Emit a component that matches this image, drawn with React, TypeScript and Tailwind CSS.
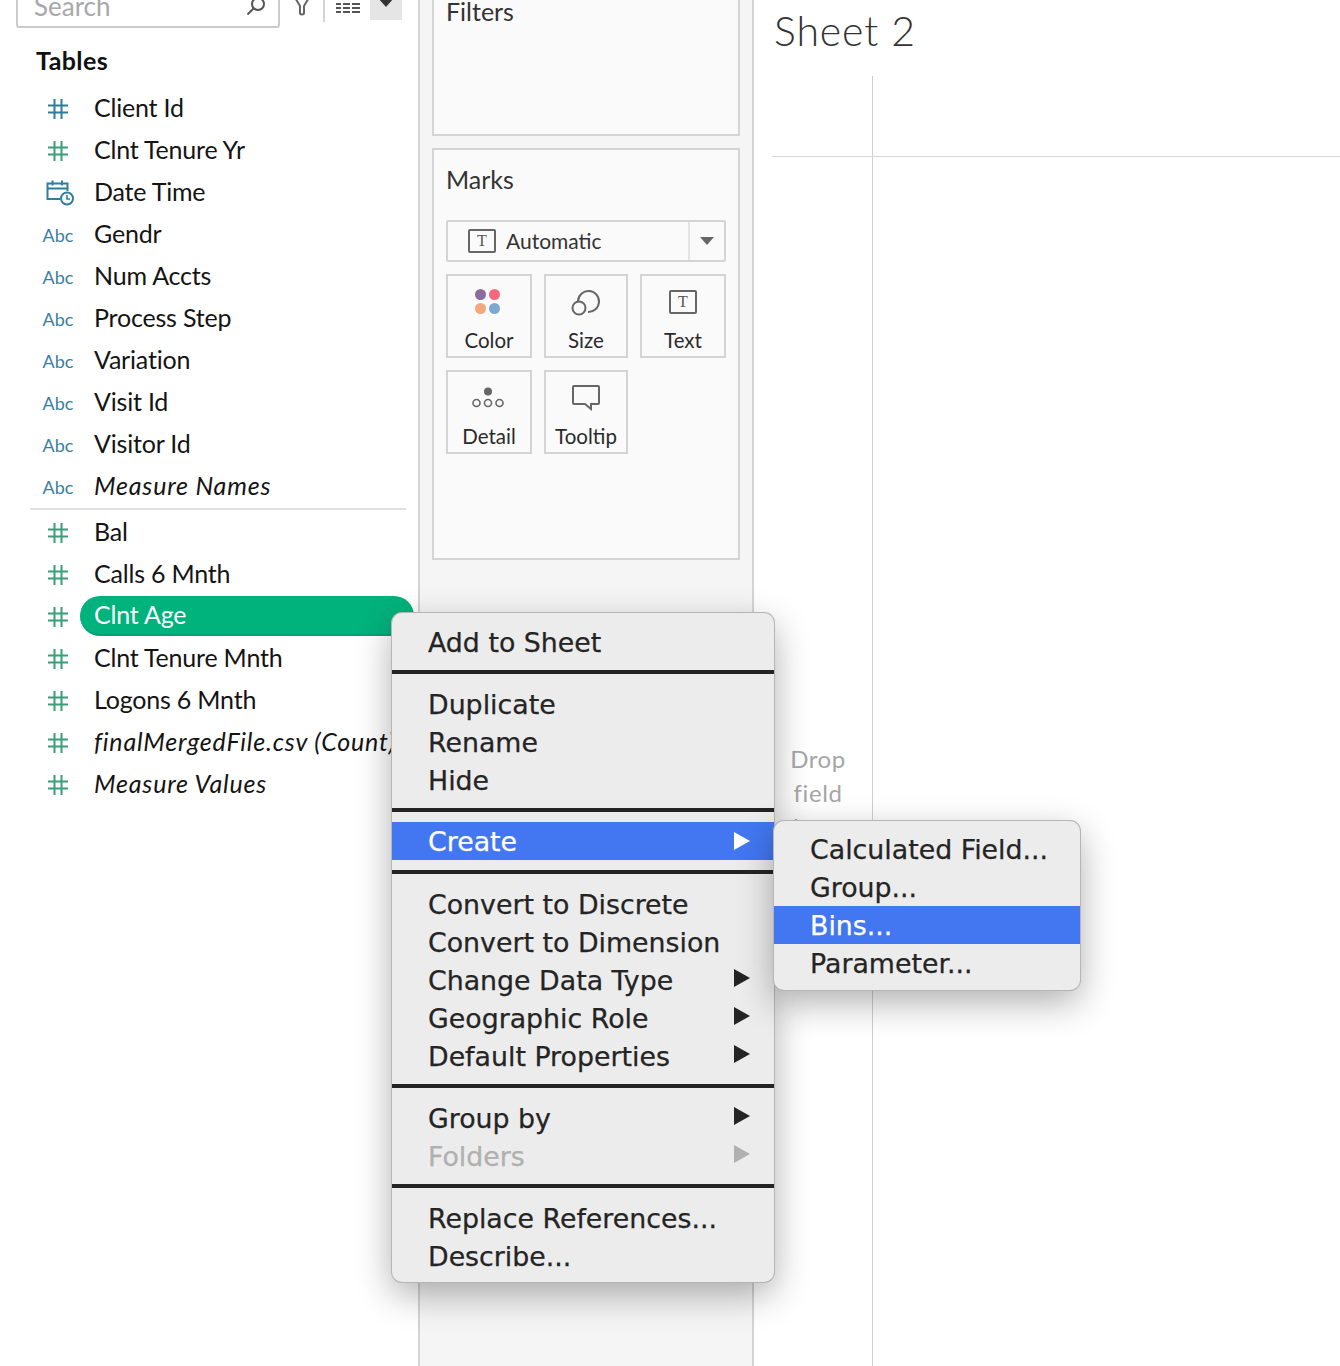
import React from "react";

const BLUE = "#2f7d9e";
const GREEN = "#3a9f78";

type Field = { name: string; icon: "hash-blue" | "hash" | "date" | "abc"; italic?: boolean; active?: boolean };

const dimensions: Field[] = [
  { name: "Client Id", icon: "hash-blue" },
  { name: "Clnt Tenure Yr", icon: "hash" },
  { name: "Date Time", icon: "date" },
  { name: "Gendr", icon: "abc" },
  { name: "Num Accts", icon: "abc" },
  { name: "Process Step", icon: "abc" },
  { name: "Variation", icon: "abc" },
  { name: "Visit Id", icon: "abc" },
  { name: "Visitor Id", icon: "abc" },
  { name: "Measure Names", icon: "abc", italic: true },
];

const measures: Field[] = [
  { name: "Bal", icon: "hash" },
  { name: "Calls 6 Mnth", icon: "hash" },
  { name: "Clnt Age", icon: "hash", active: true },
  { name: "Clnt Tenure Mnth", icon: "hash" },
  { name: "Logons 6 Mnth", icon: "hash" },
  { name: "finalMergedFile.csv (Count)", icon: "hash", italic: true },
  { name: "Measure Values", icon: "hash", italic: true },
];

function HashIcon({ color }: { color: string }) {
  return (
    <svg width="20" height="20" viewBox="0 0 20 20" fill="none" stroke={color} strokeWidth="2">
      <path d="M0 6.5h20M0 13.5h20M6.5 0v20M13.5 0v20" />
    </svg>
  );
}

function DateIcon() {
  return (
    <svg width="28" height="26" viewBox="0 0 28 26" fill="none" stroke={BLUE} strokeWidth="2" className="ml-[3px]">
      <path d="M14 19H1.5V3.5h20V11M1.5 8.5h20M6.5 0.5v5M16 0.5v5" />
      <circle cx="21" cy="18.5" r="6" fill="#fff" />
      <path d="M21 15v4h3" strokeWidth="1.6" />
    </svg>
  );
}

function FieldIcon({ icon }: { icon: Field["icon"] }) {
  if (icon === "abc") return <span className="text-[18px] text-[#3b7f9f]">Abc</span>;
  if (icon === "date") return <DateIcon />;
  return <HashIcon color={icon === "hash" ? GREEN : BLUE} />;
}

function FieldRow({ field }: { field: Field }) {
  return (
    <div className="flex h-[42px] items-center pl-[42px]">
      <div className="flex w-[32px] shrink-0 items-center justify-center">
        <FieldIcon icon={field.icon} />
      </div>
      <div
        className={`ml-[6px] flex h-[40px] flex-1 items-center self-start whitespace-nowrap rounded-full px-[14px] text-[25px] ${
          field.active ? "border-b-2 border-[#04a272] bg-[#00b27c] text-white" : "text-[#141414]"
        } ${field.italic ? "italic tracking-[0.8px]" : "tracking-[-0.2px]"}`}
      >
        {field.name}
      </div>
    </div>
  );
}

function TIcon({ className }: { className: string }) {
  return (
    <span
      className={`flex items-center justify-center rounded-[2px] border-2 border-[#666] font-['Liberation_Serif',serif] text-[#555] ${className}`}
    >
      T
    </span>
  );
}

function MarkCard({ label, wide, children }: { label: string; wide?: boolean; children: React.ReactNode }) {
  return (
    <div
      className={`flex h-[84px] flex-col items-center border-2 border-[#d4d4d4] ${wide ? "w-[86px]" : "w-[84px]"}`}
    >
      <div className="flex h-[52px] w-full items-center justify-center">{children}</div>
      <span className="text-[20.5px] leading-[24px] text-[#2b2b2b]">{label}</span>
    </div>
  );
}

type MenuRow = { label: string; arrow?: boolean; selected?: boolean; disabled?: boolean };

function MenuItem({ item }: { item: MenuRow }) {
  const color = item.selected ? "bg-[#4277f1] text-white" : item.disabled ? "text-[#b0b0b0]" : "text-[#242424]";
  const fill = item.selected ? "#fff" : item.disabled ? "#b0b0b0" : "#242424";
  return (
    <div className={`flex h-[38px] items-center justify-between whitespace-nowrap pl-[36px] pr-[24px] ${color}`}>
      <span className="mt-[2px]">{item.label}</span>
      {item.arrow && (
        <svg width="16" height="18" viewBox="0 0 16 18" className={item.selected ? "" : "-mt-[4px]"}>
          <path d="M0 0l16 9-16 9z" fill={fill} />
        </svg>
      )}
    </div>
  );
}

const menuGroups: { rows: MenuRow[]; className: string }[] = [
  { rows: [{ label: "Add to Sheet" }], className: "pt-[10px] pb-[9px]" },
  {
    rows: [{ label: "Duplicate" }, { label: "Rename" }, { label: "Hide" }],
    className: "pt-[11px] pb-[9px]",
  },
  { rows: [{ label: "Create", arrow: true, selected: true }], className: "py-[10px]" },
  {
    rows: [
      { label: "Convert to Discrete" },
      { label: "Convert to Dimension" },
      { label: "Change Data Type", arrow: true },
      { label: "Geographic Role", arrow: true },
      { label: "Default Properties", arrow: true },
    ],
    className: "pt-[11px] pb-[9px]",
  },
  {
    rows: [
      { label: "Group by", arrow: true },
      { label: "Folders", arrow: true, disabled: true },
    ],
    className: "pt-[11px] pb-[9px]",
  },
  { rows: [{ label: "Replace References..." }, { label: "Describe..." }], className: "pt-[11px] pb-[7px]" },
];

const subMenu: MenuRow[] = [
  { label: "Calculated Field..." },
  { label: "Group..." },
  { label: "Bins...", selected: true },
  { label: "Parameter..." },
];

const menuFont = "font-['DejaVu_Sans',sans-serif] text-[26.8px] [-webkit-text-stroke:0.25px]";

export default function App() {
  return (
    <div className="relative h-[1366px] w-[1340px] overflow-hidden bg-white font-['Lato',sans-serif]">
      <div className="-mt-4 flex h-[1382px]">
        {/* data pane */}
        <aside className="w-[418px] shrink-0 pr-[4px]">
          <div className="flex h-[44px] items-start pl-4">
            <div className="flex h-[44px] w-[264px] items-center justify-between rounded-b-[3px] border-2 border-[#cbcbcb] pl-[16px] pr-[12px]">
              <span className="text-[26px] text-[#a8a8a8]">Search</span>
              <svg width="20" height="20" viewBox="0 0 20 20" fill="none" stroke="#555" strokeWidth="2">
                <circle cx="12" cy="8" r="6" />
                <path d="M7.5 12.5L1.5 18.5" />
              </svg>
            </div>
            <svg width="18" height="34" viewBox="0 0 18 34" fill="none" stroke="#666" strokeWidth="2" className="ml-[13px]">
              <path d="M1 12l6 10v7.5q2 2 4 0V22l6-10z" />
            </svg>
            <div className="ml-[12px] h-[38px] w-[2px] bg-[#d4d4d4]" />
            <svg width="24" height="12" viewBox="0 0 24 12" fill="#555" className="ml-[11px] mt-[18px]">
              <path d="M0 1h5v2H0zM7 1h7v2H7zM16 1h8v2h-8zM0 5h5v2H0zM7 5h7v2H7zM16 5h8v2h-8zM0 9h5v2H0zM7 9h7v2H7zM16 9h8v2h-8z" />
            </svg>
            <div className="ml-[10px] flex h-[36px] w-[32px] items-end justify-center bg-[#e5e5e5] pb-[13px]">
              <svg width="16" height="9" viewBox="0 0 16 9">
                <path d="M0 0h16L8 9z" fill="#333" />
              </svg>
            </div>
          </div>
          <h2 className="ml-[36px] mt-[16px] h-[34px] text-[25px] font-bold leading-[32px] tracking-[0.4px] text-[#111]">
            Tables
          </h2>
          <div className="mt-[10px]">
            {dimensions.map((f) => (
              <FieldRow key={f.name} field={f} />
            ))}
          </div>
          <div className="ml-[30px] mr-[8px] h-[2px] bg-[#e0e0e0]" />
          <div className="mt-[2px]">
            {measures.map((f) => (
              <FieldRow key={f.name} field={f} />
            ))}
          </div>
        </aside>

        {/* shelves */}
        <section className="w-[336px] shrink-0 border-x-2 border-[#d4d4d4] bg-[#f5f5f5] px-[12px]">
          <div className="h-[152px] border-2 border-[#d4d4d4] bg-[#fafafa] px-[12px] pt-[7px] text-[25px] text-[#333]">
            Filters
          </div>
          <div className="mt-[12px] h-[412px] border-2 border-[#d4d4d4] bg-[#fafafa] px-[12px]">
            <div className="flex h-[60px] items-center text-[25px] text-[#333]">Marks</div>
            <div className="mt-[10px] flex h-[42px] w-[280px] items-center rounded-[2px] border-2 border-[#d4d4d4]">
              <TIcon className="ml-[20px] h-[24px] w-[28px] text-[16px]" />
              <span className="ml-[10px] flex-1 text-[21px] text-[#333]">Automatic</span>
              <div className="flex h-full w-[36px] items-center justify-center border-l-2 border-[#e4e4e4]">
                <svg width="14" height="8" viewBox="0 0 14 8">
                  <path d="M0 0h14L7 8z" fill="#666" />
                </svg>
              </div>
            </div>
            <div className="mt-[12px] flex gap-[12px]">
              <MarkCard label="Color" wide>
                <div className="mb-[2px] mr-[3px] grid grid-cols-2 gap-[3px]">
                  <span className="h-[11px] w-[11px] rounded-full bg-[#8a6d9c]" />
                  <span className="h-[11px] w-[11px] rounded-full bg-[#f4687e]" />
                  <span className="h-[11px] w-[11px] rounded-full bg-[#f3a97c]" />
                  <span className="h-[11px] w-[11px] rounded-full bg-[#7fa8d1]" />
                </div>
              </MarkCard>
              <MarkCard label="Size">
                <svg width="30" height="28" viewBox="0 0 30 28" fill="none" stroke="#666" strokeWidth="2">
                  <path d="M7 13A10.5 10.5 0 1 1 17 24" />
                  <circle cx="8" cy="20" r="6.5" />
                </svg>
              </MarkCard>
              <MarkCard label="Text" wide>
                <TIcon className="h-[24px] w-[28px] text-[16px]" />
              </MarkCard>
            </div>
            <div className="mt-[12px] flex gap-[12px]">
              <MarkCard label="Detail" wide>
                <svg width="32" height="24" viewBox="0 0 32 24" fill="none" stroke="#666" strokeWidth="1.6" className="mr-[3px]">
                  <circle cx="16" cy="5.5" r="4" fill="#666" stroke="none" />
                  <circle cx="4.5" cy="17" r="3.5" />
                  <circle cx="16" cy="17" r="3.5" />
                  <circle cx="27.5" cy="17" r="3.5" />
                </svg>
              </MarkCard>
              <MarkCard label="Tooltip">
                <svg width="28" height="26" viewBox="0 0 28 26" fill="none" stroke="#666" strokeWidth="2">
                  <path d="M2 1h24q1 0 1 1v16q0 1-1 1h-7v5l-6-5H2q-1 0-1-1V2q0-1 1-1z" />
                </svg>
              </MarkCard>
            </div>
          </div>
        </section>

        {/* canvas */}
        <main className="flex-1 pl-[18px]">
          <h1 className="mt-[19px] h-[73px] pl-[2px] text-[41px] font-light leading-[56px] tracking-[0.9px] text-[#333]">
            Sheet 2
          </h1>
          <div className="flex h-[80px]">
            <div className="w-[101px] border-r border-[#cfcfcf]" />
          </div>
          <div className="border-t border-[#d6d6d6]" />
          <div className="flex h-[1300px]">
            <div className="w-[101px] border-r border-[#cfcfcf] pr-[8px] pt-[585px] text-center text-[24px] leading-[34px] tracking-[0.6px] text-[#a6a6a6]">
              Drop
              <br />
              field
              <br />
              here
            </div>
          </div>
        </main>
      </div>

      {/* context menu */}
      <div
        className={`absolute left-[392px] top-[613px] w-[382px] overflow-hidden rounded-[10px] bg-[#ececec] shadow-[0_12px_36px_rgba(0,0,0,0.32)] ring-1 ring-[#b5b5b5] ${menuFont}`}
      >
        {menuGroups.map((group, i) => (
          <div key={i} className={i > 0 ? "border-t-4 border-[#242424]" : ""}>
            <div className={group.className}>
              {group.rows.map((item) => (
                <MenuItem key={item.label} item={item} />
              ))}
            </div>
          </div>
        ))}
      </div>

      {/* Create submenu */}
      <div
        className={`absolute left-[774px] top-[821px] w-[306px] overflow-hidden rounded-[10px] bg-[#ececec] pb-[8px] pt-[9px] shadow-[0_12px_36px_rgba(0,0,0,0.32)] ring-1 ring-[#b5b5b5] ${menuFont}`}
      >
        {subMenu.map((item) => (
          <MenuItem key={item.label} item={item} />
        ))}
      </div>
    </div>
  );
}
